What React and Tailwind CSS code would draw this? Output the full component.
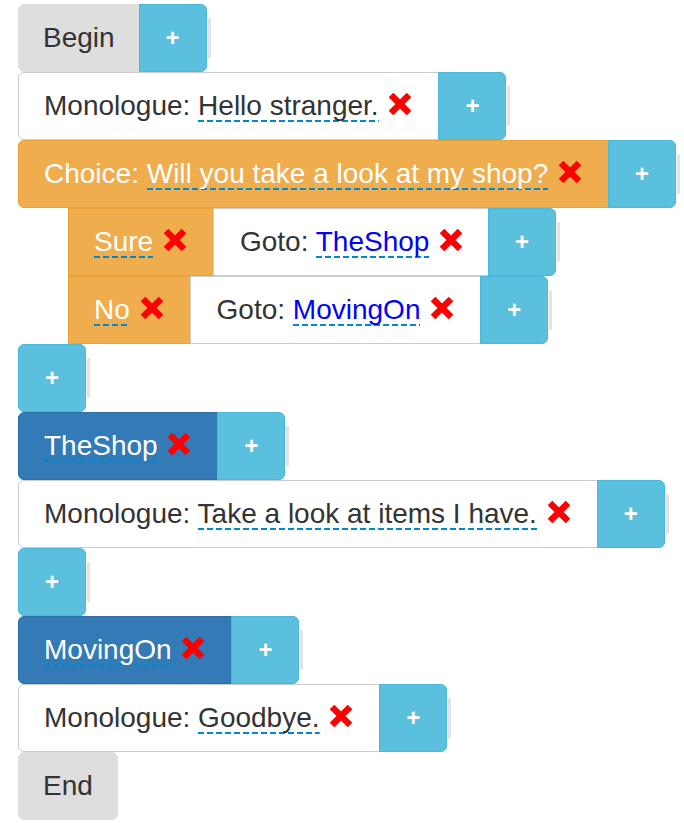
import React from "react";

const FONT = { fontFamily: '"Liberation Sans", Arial, sans-serif' };

function X() {
  return (
    <svg
      width="24"
      height="24"
      viewBox="0 0 24 24"
      className="inline-block align-[-1px] ml-[2px] mr-[2px]"
    >
      <path d="M3 3 L21 21 M21 3 L3 21" stroke="#ff0000" strokeWidth="6.5" strokeLinecap="butt" />
    </svg>
  );
}

function U({ children, link }) {
  return (
    <span
      className={
        "pb-[1px] bg-no-repeat bg-bottom bg-[length:100%_2px] bg-[image:repeating-linear-gradient(90deg,#0088cc_0_6px,transparent_6px_9px)] " +
        (link ? "text-[#0000ff]" : "")
      }
    >
      {children}
    </span>
  );
}

function Plus({ round }) {
  return (
    <div className="flex items-center">
      <div
        className={
          "h-[68px] w-[68px] flex items-center justify-center bg-[#5bc0de] border border-[#46b8da] text-white text-[24px] font-bold " +
          (round ? "rounded-[6px]" : "rounded-r-[6px] -ml-px")
        }
      >
        +
      </div>
      <div className="ml-px w-[3px] h-[40px] bg-[#e3e3e3] rounded-[1px]" />
    </div>
  );
}

const styles = {
  gray: "bg-[#dedede] border-[#dedede] text-[#333333]",
  white: "bg-white border-[#cccccc] text-[#333333]",
  orange: "bg-[#f0ad4e] border-[#eea236] text-white",
  blue: "bg-[#337ab7] border-[#2e6da4] text-white",
};

function Box({ kind, children, first = true, rounded = "rounded-l-[6px]", pad = "px-[24px]" }) {
  return (
    <div
      className={
        "h-[68px] flex items-center border text-[28px] " +
        pad +
        " " +
        styles[kind] +
        " " +
        (first ? rounded : "-ml-px")
      }
    >
      <span className="whitespace-pre">{children}</span>
    </div>
  );
}

function Row({ children, indent }) {
  return <div className={"flex items-stretch " + (indent ? "ml-[50px]" : "")}>{children}</div>;
}

export default function App() {
  return (
    <div className="bg-white min-h-[827px] pl-[18px] pt-[4px] flex flex-col items-start" style={FONT}>
      <Row>
        <Box kind="gray">Begin</Box>
        <Plus />
      </Row>
      <Row>
        <Box kind="white" pad="pl-[25px] pr-[24px]">
          {"Monologue: "}<U>Hello stranger.</U>{" "}<X />
        </Box>
        <Plus />
      </Row>
      <Row>
        <Box kind="orange" pad="pl-[25px] pr-[24px]">
          {"Choice: "}<U>Will you take a look at my shop?</U>{" "}<X />
        </Box>
        <Plus />
      </Row>
      <Row indent>
        <Box kind="orange" rounded="" pad="pl-[25px] pr-[24px]">
          <U>Sure</U>{" "}<X />
        </Box>
        <Box kind="white" first={false} pad="pl-[26px] pr-[23px]">
          {"Goto: "}<U link>TheShop</U>{" "}<X />
        </Box>
        <Plus />
      </Row>
      <Row indent>
        <Box kind="orange" rounded="" pad="pl-[25px] pr-[24px]">
          <U>No</U>{" "}<X />
        </Box>
        <Box kind="white" first={false} pad="pl-[26px] pr-[24px]">
          {"Goto: "}<U link>MovingOn</U>{" "}<X />
        </Box>
        <Plus />
      </Row>
      <Row>
        <Plus round />
      </Row>
      <Row>
        <Box kind="blue" pad="pl-[25px] pr-[24px]">
          <U>TheShop</U>{" "}<X />
        </Box>
        <Plus />
      </Row>
      <Row>
        <Box kind="white" pad="pl-[25px] pr-[24px]">
          {"Monologue: "}<U>Take a look at items I have.</U>{" "}<X />
        </Box>
        <Plus />
      </Row>
      <Row>
        <Plus round />
      </Row>
      <Row>
        <Box kind="blue" pad="pl-[25px] pr-[24px]">
          <U>MovingOn</U>{" "}<X />
        </Box>
        <Plus />
      </Row>
      <Row>
        <Box kind="white" pad="pl-[25px] pr-[24px]">
          {"Monologue: "}<U>Goodbye.</U>{" "}<X />
        </Box>
        <Plus />
      </Row>
      <Row>
        <Box kind="gray" rounded="rounded-[6px]">End</Box>
      </Row>
    </div>
  );
}
